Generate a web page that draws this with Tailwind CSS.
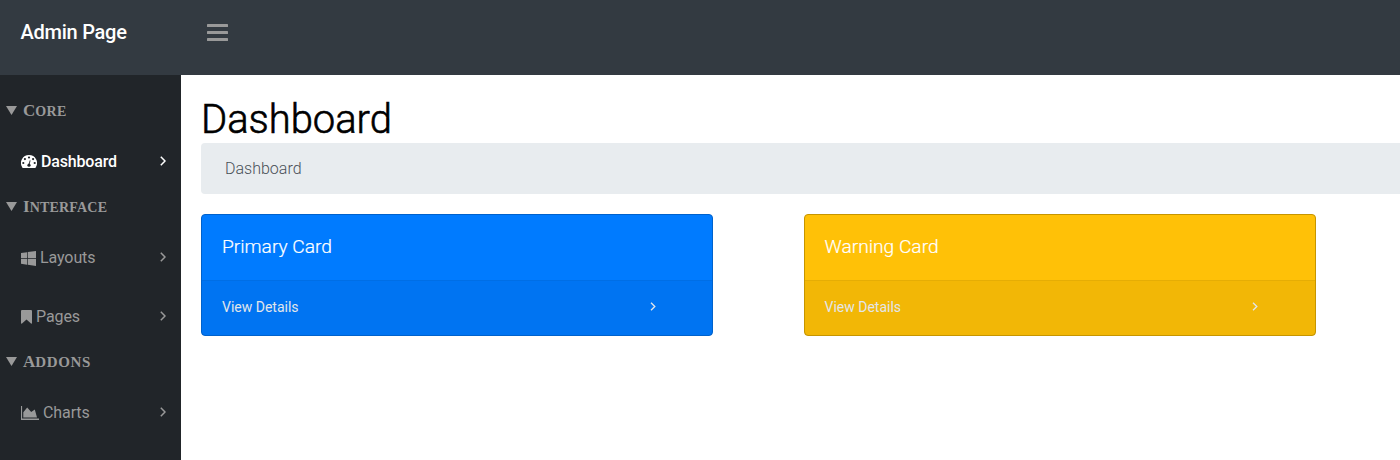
<!DOCTYPE html>
<html lang="en">
<head>
<meta charset="utf-8">
<title>Admin Page</title>
<script src="https://cdn.jsdelivr.net/npm/@tailwindcss/browser@4"></script>
</head>
<body class="h-[460px] overflow-hidden bg-white font-['Roboto',sans-serif] text-base">
<svg class="hidden">
  <symbol id="angle" viewBox="0 0 6 10"><path d="M.8.8 5 5 .8 9.2" fill="none" stroke="currentColor" stroke-width="1.5"/></symbol>
</svg>
<header class="flex h-[75px] bg-[#333a41] pt-4 pl-[20.5px]">
  <a class="h-8 w-[186.5px] text-xl leading-8 font-medium tracking-[-0.25px] text-white">Admin Page</a>
  <svg class="mt-2 h-[18px] w-[21px] text-[#999]" viewBox="0 0 21 18" fill="currentColor"><rect width="21" height="3" rx=".6"/><rect y="7" width="21" height="3" rx=".6"/><rect y="14" width="21" height="3" rx=".6"/></svg>
</header>
<div class="flex h-[385px]">
  <nav class="flex w-[181px] shrink-0 flex-col bg-[#212529] pt-6 text-[#999]">
    <h2 class="flex h-6 items-center pl-[6px] font-['Liberation_Serif',serif] font-bold">
      <svg class="mr-[6px] mb-px h-[9px] w-[11px]" viewBox="0 0 11 9" fill="currentColor"><path d="M0 0h11L5.5 9z"/></svg>
      <span class="text-[17px] leading-6">C<span class="text-[14px] tracking-[0.3px]">ORE</span></span>
    </h2>
    <a class="mt-[27px] flex h-6 items-center pr-[15px] pl-[21px] font-medium tracking-[-0.18px] text-white">
      <svg class="mr-1 h-[14px] w-4" viewBox="0 0 16 14"><path fill="currentColor" d="M8 0a8 8 0 0 1 6.7 12.4q-.3.5-.9.5H2.2q-.6 0-.9-.5A8 8 0 0 1 8 0z"/><g fill="#212529"><circle cx="8" cy="2.5" r="1.1"/><circle cx="3.9" cy="4.1" r="1.1"/><circle cx="12.1" cy="4.1" r="1.1"/><circle cx="2.3" cy="8" r="1.1"/><circle cx="13.7" cy="8" r="1.1"/><circle cx="8" cy="10.2" r="1.6"/></g><path d="m8 10 1.1-4.6" stroke="#212529" stroke-width=".9"/></svg>
      <span class="grow">Dashboard</span><svg class="mb-[2px] h-[10px] w-[6px]"><use href="#angle"/></svg>
    </a>
    <h2 class="mt-[21px] flex h-6 items-center pl-[6px] font-['Liberation_Serif',serif] font-bold">
      <svg class="mr-[6px] mb-px h-[9px] w-[11px]" viewBox="0 0 11 9" fill="currentColor"><path d="M0 0h11L5.5 9z"/></svg>
      <span class="text-[17px] leading-6">I<span class="text-[14px] tracking-[0.2px]">NTERFACE</span></span>
    </h2>
    <a class="mt-[27px] flex h-6 items-center pr-[15px] pl-[21px] tracking-[-0.1px]">
      <svg class="mr-1 h-[15px] w-[15px]" viewBox="0 0 15 15" fill="currentColor"><path d="M0 2.1 6.1 1.2v5.9H0zM6.8 1.1 15 0v7.1H6.8zM0 7.8h6.1v5.9L0 12.8zM6.8 7.8H15V15l-8.2-1.2z"/></svg>
      <span class="grow">Layouts</span><svg class="mb-[2px] h-[10px] w-[6px]"><use href="#angle"/></svg>
    </a>
    <a class="mt-[35px] flex h-6 items-center pr-[15px] pl-[21px] tracking-[-0.1px]">
      <svg class="mr-1 h-[14px] w-[11px]" viewBox="0 0 11 14" fill="currentColor"><path d="M1 0h9q1 0 1 1v12q0 1-1 .6L5.5 9.4 1 13.6q-1 .4-1-.6V1q0-1 1-1z"/></svg>
      <span class="grow">Pages</span><svg class="mb-[2px] h-[10px] w-[6px]"><use href="#angle"/></svg>
    </a>
    <h2 class="mt-[21px] flex h-6 items-center pl-[6px] font-['Liberation_Serif',serif] font-bold">
      <svg class="mr-[6px] mb-px h-[9px] w-[11px]" viewBox="0 0 11 9" fill="currentColor"><path d="M0 0h11L5.5 9z"/></svg>
      <span class="text-[17px] leading-6">A<span class="text-[15px] tracking-[0.65px]">DDONS</span></span>
    </h2>
    <a class="mt-[27px] flex h-6 items-center pr-[15px] pl-[21px] tracking-[-0.1px]">
      <svg class="mr-1 h-[14px] w-[18px]" viewBox="0 0 18 14" fill="currentColor"><path d="M0 0h1.1v12.6H18V14H0zM2.3 11.5V6.2L6.2 1.5 10.2 6l3.6-2.6 2.2 8.1z"/></svg>
      <span class="grow">Charts</span><svg class="mb-[2px] h-[10px] w-[6px]"><use href="#angle"/></svg>
    </a>
  </nav>
  <main class="grow pt-5 pl-5">
    <h1 class="h-12 pt-px text-[40px] leading-12 font-light tracking-[-0.05px] text-black [-webkit-text-stroke:0.6px_black]">Dashboard</h1>
    <div class="h-[51px] rounded-l bg-[#e8ecef] pl-6 leading-[51px] font-light text-[#495057]">Dashboard</div>
    <div class="mt-5 flex gap-[91px]">
      <section class="h-[122px] w-[512px] rounded border border-[#0062cc] bg-[#007bff] text-white">
        <div class="h-[65px] pl-5 text-[19.2px] leading-[63px] font-light [-webkit-text-stroke:0.2px_white]">Primary Card</div>
        <div class="flex h-[55px] items-center border-t border-black/5 bg-black/5 pr-[56px] pb-[2px] pl-5 text-sm text-[#e2e6ea]"><span class="grow">View Details</span><svg class="mb-[2px] h-[9px] w-[6px]"><use href="#angle"/></svg></div>
      </section>
      <section class="h-[122px] w-[512px] rounded border border-[#c69500] bg-[#ffc107] text-white">
        <div class="h-[65px] pl-[19.5px] text-[19.2px] leading-[63px] font-light [-webkit-text-stroke:0.2px_white]">Warning Card</div>
        <div class="flex h-[55px] items-center border-t border-black/5 bg-black/5 pr-[57px] pb-[2px] pl-[19.5px] text-sm text-[#e2e6ea]"><span class="grow">View Details</span><svg class="mb-[2px] h-[9px] w-[6px]"><use href="#angle"/></svg></div>
      </section>
    </div>
  </main>
</div>
</body>
</html>
